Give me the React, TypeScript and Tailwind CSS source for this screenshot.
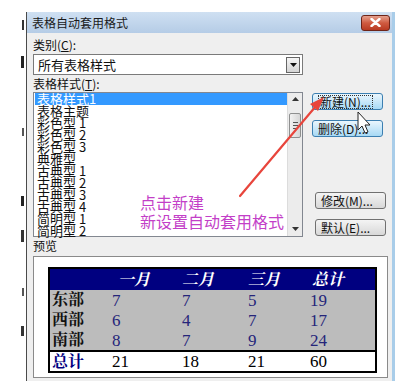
import React from 'react'

const ui = { fontFamily: '"Noto Sans CJK SC", "Liberation Sans", sans-serif' }
const serif = { fontFamily: '"Liberation Serif", "Noto Serif CJK SC", "Noto Sans CJK SC", serif' }

const styles = [
  '表格样式1',
  '表格主题',
  '彩色型 1',
  '彩色型 2',
  '彩色型 3',
  '典雅型',
  '古典型 1',
  '古典型 2',
  '古典型 3',
  '古典型 4',
  '简明型 1',
  '简明型 2',
]

const rows = [
  { name: '东部', v: ['7', '7', '5', '19'] },
  { name: '西部', v: ['6', '4', '7', '17'] },
  { name: '南部', v: ['8', '7', '9', '24'] },
]

function Btn({ label, hot, className = '' }: { label: React.ReactNode; hot?: boolean; className?: string }) {
  return (
    <div
      className={`h-[17px] w-[71px] rounded-[3px] border flex items-center pl-[5px] text-[12px] leading-none text-[#111] ${
        hot
          ? 'border-[#3c7fb1] bg-gradient-to-b from-[#eaf6fd] to-[#a7d9f5]'
          : 'border-[#707070] bg-gradient-to-b from-[#f4f4f4] to-[#d8d8d8]'
      } ${className}`}
    >
      {label}
    </div>
  )
}

function Backdrop() {
  return (
    <div className="w-[26px] shrink-0 flex flex-col items-end pr-[2px]">
      <div className="mt-[8px] w-[2px] h-[10px] bg-[#333]" />
      <div className="mt-[26px] w-[3px] h-[12px] bg-[#222]" />
      <div className="mt-[60px] w-[2px] h-[8px] bg-[#555]" />
      <div className="mt-[60px] w-[3px] h-[10px] bg-[#222]" />
      <div className="mt-[24px] w-[3px] h-[12px] bg-[#333]" />
      <div className="mt-[46px] w-[2px] h-[8px] bg-[#555]" />
      <div className="mt-[30px] w-[3px] h-[10px] bg-[#333]" />
    </div>
  )
}

export default function App() {
  return (
    <div className="relative w-[410px] h-[381px] bg-white overflow-hidden" style={ui}>
      <div className="flex pt-[12px] h-full">
        <Backdrop />
        <div className="w-[369px] shrink-0 h-[375px] bg-[#efefef] border-l border-l-[#4a4a4a] border-r-[3px] border-r-[#a9cde9] flex flex-col">
          {/* title bar */}
          <div className="h-[21px] shrink-0 bg-gradient-to-b from-[#cfe0f2] to-[#b5cce6] flex items-center pl-[5px] pr-[2px]">
            <span className="text-[12px] text-[#1a1a1a] leading-none">表格自动套用格式</span>
            <div className="ml-auto h-[16px] w-[29px] rounded-[3px] border border-[#6e2418] bg-gradient-to-b from-[#e4a08e] via-[#cf5a40] to-[#b83a22] flex items-center justify-center">
              <svg width="11" height="9" viewBox="0 0 11 9">
                <path d="M1.5 1 L9.5 8 M9.5 1 L1.5 8" stroke="#fff" strokeWidth="2.4" strokeLinecap="round" />
              </svg>
            </div>
          </div>

          {/* body */}
          <div className="pl-[6px] flex flex-col">
            <div className="mt-[5px] h-[14px] text-[12px] leading-[14px] text-[#111]">
              类别(<span className="underline">C</span>):
            </div>
            <div className="mt-[2px] h-[21px] w-[270px] border border-[#7a7a7a] bg-white flex items-center pl-[4px] pr-[2px]">
              <span className="text-[13px] leading-none text-[#111]">所有表格样式</span>
              <div className="ml-auto h-[16px] w-[14px] border border-[#666] bg-gradient-to-b from-[#f6f6f6] to-[#d4d4d4] flex items-center justify-center">
                <svg width="7" height="4" viewBox="0 0 7 4">
                  <path d="M0 0 H7 L3.5 4 Z" fill="#111" />
                </svg>
              </div>
            </div>
            <div className="mt-[1px] h-[15px] text-[12px] leading-[15px] text-[#111]">
              表格样式(<span className="underline">T</span>):
            </div>

            <div className="flex mt-[1px]">
              {/* list */}
              <div className="h-[145px] w-[270px] border border-[#828790] bg-white flex">
                <div className="flex-1 pt-[0px] pl-[1px]">
                  {styles.map((s, i) => (
                    <div
                      key={s}
                      className={`h-[12px] text-[13px] leading-[12px] pl-[2px] whitespace-pre ${
                        i === 0 ? 'bg-[#3399ff] text-white' : 'text-[#111]'
                      }`}
                    >
                      {s}
                    </div>
                  ))}
                </div>
                <div className="w-[15px] bg-[#ececec] border-l border-[#dcdcdc] flex flex-col items-center">
                  <div className="h-[12px] flex items-center">
                    <svg width="7" height="4" viewBox="0 0 7 4">
                      <path d="M0 4 H7 L3.5 0 Z" fill="#333" />
                    </svg>
                  </div>
                  <div className="mt-[8px] h-[25px] w-[12px] rounded-[2px] border border-[#8e8f8f] bg-gradient-to-r from-[#f2f2f2] to-[#d6d6d6] flex flex-col items-center justify-center gap-[2px]">
                    <div className="w-[5px] h-px bg-[#555]" />
                    <div className="w-[5px] h-px bg-[#555]" />
                    <div className="w-[5px] h-px bg-[#555]" />
                  </div>
                  <div className="mt-auto h-[14px] flex items-center">
                    <svg width="7" height="4" viewBox="0 0 7 4">
                      <path d="M0 0 H7 L3.5 4 Z" fill="#333" />
                    </svg>
                  </div>
                </div>
              </div>

              {/* buttons */}
              <div className="ml-[9px] flex flex-col pt-[1px]">
                <Btn hot label={<span className="border border-dotted border-[#333] px-[1px]">新建(N)...</span>} />
                <Btn hot className="mt-[10px]" label="删除(D)..." />
                <Btn className="mt-[55px] ml-[3px]" label="修改(M)..." />
                <Btn className="mt-[10px] ml-[3px]" label="默认(E)..." />
              </div>
            </div>

            <div className="mt-[2px] h-[14px] text-[12px] leading-[14px] text-[#111]">预览</div>

            {/* preview */}
            <div className="mt-[3px] h-[122px] w-[355px] border border-[#8a8a8a] bg-white pl-[14px] pt-[10px]">
              <div className="w-[329px] border-2 border-black" style={serif}>
                <div className="grid grid-cols-[62px_70px_66px_62px_65px] h-[21px] bg-[#000080] items-center text-white text-[16px] font-bold italic leading-none">
                  <div />
                  <div className="pl-[6px]">一月</div>
                  <div>二月</div>
                  <div>三月</div>
                  <div className="pl-[2px]">总计</div>
                </div>
                <div className="bg-[#bcbcbc] border-b-2 border-black">
                  {rows.map((r) => (
                    <div key={r.name} className="grid grid-cols-[62px_70px_66px_62px_65px] h-[20px] items-center text-[17px] leading-none">
                      <div className="pl-[2px] font-bold text-[16px] text-[#111]">{r.name}</div>
                      {r.v.map((n, i) => (
                        <div key={i} className="text-[#25257a]">{n}</div>
                      ))}
                    </div>
                  ))}
                </div>
                <div className="grid grid-cols-[62px_70px_66px_62px_65px] h-[19px] items-center text-[17px] leading-none">
                  <div className="pl-[2px] font-bold text-[16px] text-[#000080]">总计</div>
                  <div>21</div>
                  <div>18</div>
                  <div>21</div>
                  <div>60</div>
                </div>
              </div>
            </div>
          </div>
        </div>
      </div>

      {/* annotation overlay */}
      <div className="absolute left-[140px] top-[193px] text-[16px] leading-[19px] text-[#c33fc8]">
        <div>点击新建</div>
        <div>新设置自动套用格式</div>
      </div>
      <svg className="absolute left-0 top-0 pointer-events-none" width="410" height="381" viewBox="0 0 410 381">
        <line x1="240" y1="196" x2="316" y2="106" stroke="#e8453c" strokeWidth="2.2" strokeLinecap="round" />
        <path d="M324 97 L310 104 L318 111 Z" fill="#e8453c" />
        <path
          d="M358 112 L358 130 L362 126 L365 133 L368 132 L365 125 L370 125 Z"
          fill="#fff"
          stroke="#222"
          strokeWidth="1"
          strokeLinejoin="round"
        />
      </svg>
    </div>
  )
}
